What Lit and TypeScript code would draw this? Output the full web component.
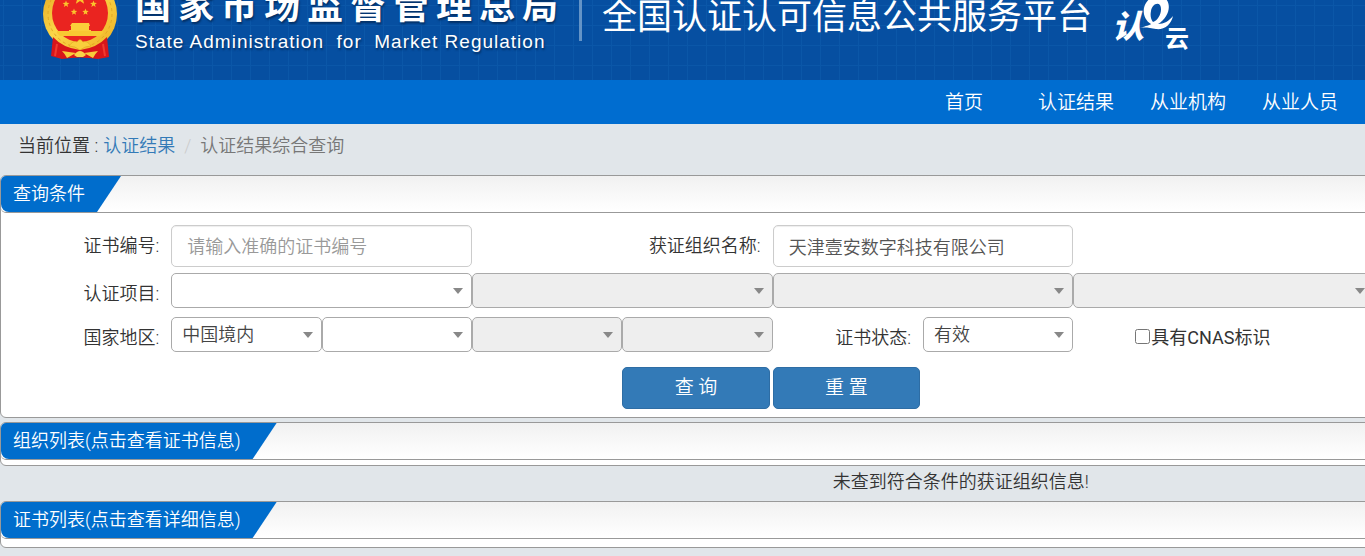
import { LitElement, html, css, svg } from "lit";
import { customElement, property } from "lit/decorators.js";

const star = (x: number, y: number, r: number) => {
  const points = Array.from({ length: 10 }, (_, i) => {
    const radius = i % 2 ? r * 0.42 : r;
    const angle = (Math.PI / 5) * i - Math.PI / 2;
    return `${(x + radius * Math.cos(angle)).toFixed(2)},${(y + radius * Math.sin(angle)).toFixed(2)}`;
  }).join(" ");
  return svg`<polygon points=${points} fill="#fbc42c"></polygon>`;
};

@customElement("state-emblem")
class StateEmblem extends LitElement {
  static styles = css`
    :host { display: block; }
    svg { display: block; }
  `;
  render() {
    return html`
      <svg width="76" height="84" viewBox="0 0 76 84" role="img" aria-label="国徽">
        <defs>
          <linearGradient id="gold" x1="0" y1="0" x2="1" y2="1">
            <stop offset="0" stop-color="#e2a11b"></stop>
            <stop offset="0.45" stop-color="#fbd648"></stop>
            <stop offset="1" stop-color="#eeb023"></stop>
          </linearGradient>
        </defs>
        <ellipse cx="38" cy="38" rx="37" ry="37" fill="url(#gold)"></ellipse>
        <ellipse cx="38" cy="38" rx="32" ry="33" fill="none" stroke="#e3a724" stroke-width="1" stroke-dasharray="3 3"></ellipse>
        <ellipse cx="38" cy="37" rx="28" ry="29" fill="#ea2420"></ellipse>
        ${star(38, 22, 7)} ${star(24, 28, 3.6)} ${star(51.5, 28, 3.6)}
        ${star(32, 36, 3.4)} ${star(43.5, 36, 3.4)}
        <path d="M30 47 h17 l1 3 h-1 v4 h2 v2 h-22 v-2 h2 v-4 h-1 Z" fill="#fbce3a"></path>
        <path d="M15 55 h46 v2 l-3 3 H18 l-3 -3 Z" fill="#f8c832"></path>
        <path d="M11 61 Q21 72 38 74 Q55 72 65 61 L67 81 L56 83 Q38 80 20 83 L9 80 Z" fill="#d8151a"></path>
        <path d="M15 68 L13 80 M61 68 L63 80" fill="none" stroke="#f03a30" stroke-width="2"></path>
        <path d="M27 70 Q31 64 35 66 Q38 61 41 66 Q45 64 49 70 Q43 70 38 74 Q33 70 27 70 Z" fill="#f9cf3c" stroke="#dc9f1c" stroke-width="0.5"></path>
        <path d="M20 75 L34 77 L25 82 Q23 78 20 75 Z M56 75 L42 77 L51 82 Q53 78 56 75 Z" fill="#f8cc3b"></path>
        <path d="M32 79 Q38 71 44 79 L41 81 H35 Z" fill="#fbd348"></path>
      </svg>
    `;
  }
}

@customElement("cloud-logo")
class CloudLogo extends LitElement {
  static styles = css`
    :host { display: block; }
    svg { display: block; }
    .script { font: italic 900 32px "Noto Sans CJK SC", sans-serif; }
    .cloud { font: 700 24px "Noto Sans CJK SC", sans-serif; }
  `;
  render() {
    return html`
      <svg width="80" height="62" viewBox="0 0 80 62" fill="#fff" role="img" aria-label="认e云">
        <text class="script" x="2" y="47">认</text>
        <path fill-rule="evenodd" d="M30 37 C36 35 40 34 41 33 C33 28 32 18 36 12 C40 5 50 2 56 8 C62 15 58 27 48 33 C54 33 59 30 63 25 C61 34 54 39 46 38 C40 37 35 36 30 37 Z M43 31 C49 29 53 19 50 14 C47 11 42 14 41 20 C40 25 41 28 43 31 Z"></path>
        <text class="cloud" x="55" y="56">云</text>
      </svg>
    `;
  }
}

@customElement("titled-panel")
class TitledPanel extends LitElement {
  @property() heading = "";
  static styles = css`
    :host {
      display: block;
      background: #fff;
      border: 1px solid #999;
      border-radius: 6px;
    }
    .bar {
      height: 37px;
      box-sizing: border-box;
      border-bottom: 1px solid #999;
      border-radius: 5px;
      background: linear-gradient(#f1f1f1, #fff);
      display: flex;
    }
    .tab {
      margin: 0;
      padding: 0 36px 0 12px;
      font-size: 18px;
      font-weight: inherit;
      line-height: 36px;
      color: #fff;
      background: #006dcc;
      border-radius: 5px 0 0 8px;
      clip-path: polygon(0 0, 100% 0, calc(100% - 24px) 100%, 0 100%);
    }
  `;
  render() {
    return html`
      <div class="bar"><h2 class="tab">${this.heading}</h2></div>
      <slot></slot>
    `;
  }
}

@customElement("app-root")
class AppRoot extends LitElement {
  static styles = css`
    :host {
      display: block;
      min-height: 100vh;
      overflow: hidden;
      background: #e1e6ea;
      color: #333;
      font-family: Roboto, "Noto Sans CJK SC", sans-serif;
      font-size: 18px;
      font-weight: 350;
      line-height: 26px;
    }
    *, *::before { box-sizing: border-box; }
    .banner {
      height: 80px;
      overflow: hidden;
      display: flex;
      align-items: flex-start;
      padding-left: 42px;
      color: #fff;
      background:
        linear-gradient(90deg, #0b57a8 1px, transparent 1px) 3px 0 / 19px 20px,
        linear-gradient(#0b57a8 1px, transparent 1px) 0 5px / 19px 20px,
        #064fa1;
    }
    .emblem { margin-top: -24px; }
    .agency {
      margin: -18px 0 0 17px;
      width: 444px;
      white-space: nowrap;
      text-shadow: 1px 2px 2px #033066;
    }
    .agency-name {
      margin: 0;
      font-size: 36px;
      font-weight: 700;
      line-height: 50px;
      letter-spacing: 7px;
    }
    .agency-en {
      margin: 0;
      font-family: "Liberation Sans", sans-serif;
      font-size: 19px;
      font-weight: 400;
      line-height: 20px;
      letter-spacing: 1px;
      white-space: pre;
    }
    .rule { width: 3px; height: 41px; background: #6494c7; }
    .platform {
      margin: -7px 0 0 20px;
      font-size: 35px;
      font-weight: 400;
      line-height: 50px;
      white-space: nowrap;
    }
    .cloud { margin: -9px 0 0 18px; }
    .menu {
      display: flex;
      justify-content: flex-end;
      padding-right: 9px;
      background: #006dd0;
    }
    .menu a {
      width: 112px;
      padding-top: 2px;
      text-align: center;
      color: #fff;
      font-size: 19px;
      line-height: 42px;
      text-decoration: none;
    }
    .crumbs {
      display: flex;
      padding: 9px 18px 16px;
      white-space: nowrap;
    }
    .crumbs a { color: #337ab7; text-decoration: none; margin-left: 5px; }
    .crumbs .slash { color: #ccc; padding: 0 9px; }
    .crumbs .here { color: #777; }
    .panel { margin-right: -10px; }
    .query {
      display: grid;
      grid-template-columns: repeat(9, minmax(0, 1fr));
      padding: 12px 0 8px 20px;
      align-items: start;
    }
    .caption {
      text-align: right;
      padding: 8px 12px 0 0;
      white-space: nowrap;
    }
    .wide { grid-column: span 2; }
    .org { grid-column: 4 / span 2; }
    .state { grid-column: 6; }
    .single { height: 48px; }
    .double { height: 44px; }
    input, select, button { font: inherit; color: #555; }
    .text {
      width: 100%;
      height: 42px;
      padding: 0 15px;
      background: #fff;
      border: 1px solid #ccc;
      border-radius: 5px;
      box-shadow: inset 0 1px 1px #eee;
    }
    .text::placeholder { color: #999; opacity: 1; }
    .pick {
      appearance: none;
      width: 100%;
      height: 35px;
      padding: 0 24px 0 10px;
      color: #444;
      border: 1px solid #aaa;
      border-radius: 5px;
      background: #fff url("data:image/svg+xml,%3Csvg xmlns='http://www.w3.org/2000/svg' width='10' height='6'%3E%3Cpath d='M0 0H10L5 6Z' fill='%23888'/%3E%3C/svg%3E") no-repeat right 8px center;
    }
    .pick:disabled { background-color: #eee; opacity: 1; }
    .mark {
      grid-column: 8 / span 2;
      display: flex;
      align-items: center;
      padding: 8px 0 0 62px;
      white-space: nowrap;
      font-weight: 400;
    }
    .mark input {
      width: 15px;
      height: 15px;
      margin: 0 1px 4px 0;
    }
    .action {
      height: 42px;
      margin: 6px 3px 0 0;
      color: #fff;
      font-size: 19px;
      background: #337ab7;
      border: 1px solid #2e6da4;
      border-radius: 5px;
    }
    .first { grid-column: 5; }
    .panel-gap { margin-top: 4px; }
    .list { height: 5px; }
    .details { height: 8px; }
    .notice {
      margin: 0;
      padding: 3px 0 6px 61%;
      white-space: nowrap;
    }
  `;

  render() {
    return html`
      <header class="banner">
        <state-emblem class="emblem"></state-emblem>
        <div class="agency">
          <p class="agency-name">国家市场监督管理总局</p>
          <p class="agency-en">State Administration  for  Market Regulation</p>
        </div>
        <span class="rule"></span>
        <span class="platform">全国认证认可信息公共服务平台</span>
        <cloud-logo class="cloud"></cloud-logo>
      </header>
      <nav class="menu">
        ${["首页", "认证结果", "从业机构", "从业人员"].map((t) => html`<a href="#">${t}</a>`)}
      </nav>
      <nav class="crumbs">
        <span>当前位置 :</span>
        <a href="#">认证结果</a>
        <span class="slash">/</span>
        <span class="here">认证结果综合查询</span>
      </nav>

      <titled-panel class="panel" heading="查询条件">
        <form class="query" @submit=${(e: Event) => e.preventDefault()}>
          <label class="caption single" for="number">证书编号:</label>
          <input class="text wide" id="number" placeholder="请输入准确的证书编号" />
          <label class="caption org" for="company">获证组织名称:</label>
          <input class="text wide" id="company" value="天津壹安数字科技有限公司" />
          <span></span><span></span>

          <label class="caption double" for="project">认证项目:</label>
          <select class="pick wide" id="project"></select>
          <select class="pick wide" aria-label="认证项目二级" disabled></select>
          <select class="pick wide" aria-label="认证项目三级" disabled></select>
          <select class="pick wide" aria-label="认证项目四级" disabled></select>

          <label class="caption double" for="region">国家地区:</label>
          <select class="pick" id="region"><option>中国境内</option></select>
          <select class="pick" aria-label="省"></select>
          <select class="pick" aria-label="市" disabled></select>
          <select class="pick" aria-label="区县" disabled></select>
          <label class="caption state" for="status">证书状态:</label>
          <select class="pick" id="status"><option>有效</option></select>
          <label class="mark"><input type="checkbox" />具有CNAS标识</label>

          <button class="action first">查 询</button>
          <button class="action" type="reset">重 置</button>
        </form>
      </titled-panel>

      <titled-panel class="panel panel-gap" heading="组织列表(点击查看证书信息)">
        <div class="list"></div>
      </titled-panel>
      <p class="notice">未查到符合条件的获证组织信息!</p>
      <titled-panel class="panel" heading="证书列表(点击查看详细信息)">
        <div class="details"></div>
      </titled-panel>
    `;
  }
}
